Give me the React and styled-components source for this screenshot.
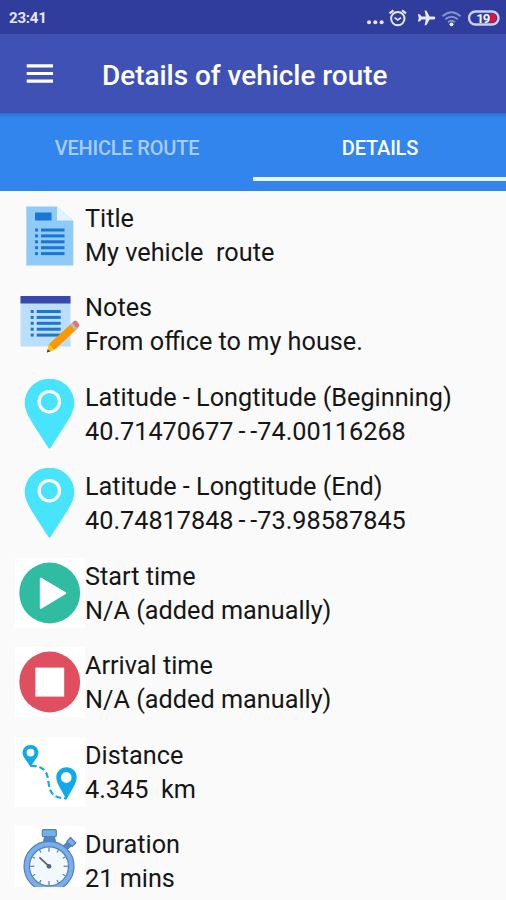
import React from "react";
import styled, { createGlobalStyle } from "styled-components";

const Global = createGlobalStyle`
  * { box-sizing: border-box; }
  body { margin: 0; background: #fafafa; font-family: Roboto, sans-serif; }
`;

const Screen = styled.div`
  width: 506px;
  height: 900px;
  display: flex;
  flex-direction: column;
  background: #fafafa;
  overflow: hidden;
`;

const StatusBar = styled.div`
  height: 34px;
  flex: none;
  display: flex;
  align-items: center;
  justify-content: space-between;
  padding: 1px 6px 0 9px;
  background: #303d9d;
`;

const Clock = styled.span`
  font-size: 15px;
  font-weight: 700;
  line-height: 18px;
  letter-spacing: -0.2px;
  color: #e6e9fa;
`;

const AppBar = styled.header`
  height: 79px;
  flex: none;
  display: flex;
  align-items: center;
  padding: 3px 26px 0;
  background: #3f51b5;
  svg { margin-top: -2px; }
`;

const PageTitle = styled.h1`
  margin: 1px 0 0 48px;
  font-size: 27.9px;
  font-weight: 500;
  line-height: 34px;
  color: #fff;
  white-space: nowrap;
`;

const Tabs = styled.nav`
  height: 78px;
  flex: none;
  display: grid;
  grid-template-columns: 253px 253px;
  padding-bottom: 10px;
  background: linear-gradient(#2b6bc8 0, #3079dc 2px, #3285ec 6px);
`;

const Tab = styled.div`
  display: flex;
  align-items: center;
  justify-content: center;
  border-bottom: 4px solid ${(p) => (p.$active ? "#e9f2fe" : "transparent")};
  padding-top: 5px;
  padding-left: 1px;
  font-size: 20px;
  font-weight: 500;
  letter-spacing: -0.2px;
  color: ${(p) => (p.$active ? "#fff" : "#a9cdf8")};
`;

const List = styled.main`
  height: 695.5px;
  flex: none;
  overflow: hidden;
  padding: 8.5px 0 0 15px;
`;

const Row = styled.div`
  height: 89.5px;
  display: flex;
`;

const Tile = styled.div`
  width: 70px;
  height: 70px;
  flex: none;
  background: ${(p) => (p.$white ? "#fff" : "transparent")};
  svg { display: block; }
`;

const Lines = styled.div`
  padding-top: 2px;
`;

const Line = styled.div`
  font-size: 25.25px;
  line-height: 34.3px;
  color: #161616;
  white-space: pre;
  word-spacing: ${(p) => p.$wordSpacing || 0}px;
`;

const Icon = ({ children }) => (
  <svg width="70" height="70" viewBox="0 0 70 70">{children}</svg>
);

const Bullets = ({ x, y, step, dash }) => (
  <g fill="#1976d2">
    {[0, 1, 2, 3, 4].map((i) => (
      <React.Fragment key={i}>
        <rect x={x} y={y + i * step} width="3" height="3" />
        <rect x={x + 6} y={y + i * step} width={dash} height="3" />
      </React.Fragment>
    ))}
  </g>
);

const DocumentIcon = () => (
  <Icon>
    <path d="M11.3 6.5H42L58.3 21V65.5H11.3Z" fill="#90caf9" />
    <path d="M42 6.5L57.5 20.5H42Z" fill="#e1f5fe" />
    <rect x="20" y="12.5" width="16.5" height="8" fill="#1976d2" />
    <Bullets x={20} y={28.5} step={5.9} dash={23.5} />
  </Icon>
);

const NotesIcon = () => (
  <Icon>
    <rect x="5.5" y="9" width="50" height="48.5" fill="#bbdefb" />
    <rect x="5.5" y="7" width="50" height="7.5" fill="#3949ab" />
    <Bullets x={15.7} y={21} step={5.9} dash={24} />
    <path d="M33.8 55.2L57 34L62.2 39.8L39 61.2Z" fill="#ff9800" />
    <path d="M33.8 55.2L31.8 63.5L39 61.2Z" fill="#ffc107" />
    <path d="M32.6 60.2L31.8 63.5L35.5 62.4Z" fill="#37474f" />
    <path d="M55 35.8L57.5 33.5L63 39.2L60.3 41.6Z" fill="#b0bec5" />
    <path d="M57.2 33.7L59 32Q60.4 31 61.7 32.3L64 35Q65 36.4 63.7 37.7L62 39.3Z" fill="#e57373" />
  </Icon>
);

const PinIcon = () => (
  <Icon>
    <path d="M34.5 -.3C20.8 -.3 9.8 10.6 9.8 24C9.8 34 16.5 42.5 33.5 69Q34.5 70.5 35.5 69C52.5 42.5 59.3 34 59.3 24C59.3 10.6 48.2 -.3 34.5 -.3Z" fill="#48e4fe" />
    <circle cx="34.3" cy="22.7" r="10.2" fill="none" stroke="#fff" strokeWidth="3.2" />
  </Icon>
);

const PlayIcon = () => (
  <Icon>
    <circle cx="34.7" cy="35" r="30.4" fill="#30bca1" />
    <path d="M25.8 20.5V49.8L50.2 35.2Z" fill="#fff" stroke="#fff" strokeWidth="2" strokeLinejoin="round" />
  </Icon>
);

const StopIcon = () => (
  <Icon>
    <circle cx="34.7" cy="35" r="30.4" fill="#e04f5f" />
    <rect x="20.4" y="20.6" width="28.8" height="29" fill="#fff" />
  </Icon>
);

const DistanceIcon = () => (
  <Icon>
    <g fill="#10a9ea" fillRule="evenodd">
      <path d="M15.5 8C10.8 8 7.6 11.4 7.6 15.6C7.6 20 11 22.8 15.5 30C20 22.8 23.4 20 23.4 15.6C23.4 11.4 20.2 8 15.5 8ZM15.5 11.7A3.9 3.9 0 1 1 15.5 19.5A3.9 3.9 0 1 1 15.5 11.7Z" />
      <path d="M51.5 30.3C45.5 30.3 41.3 34.7 41.3 40.3C41.3 46.5 46 52 51.5 62.5C57 52 61.7 46.5 61.7 40.3C61.7 34.7 57.5 30.3 51.5 30.3ZM51.2 35.1A5.4 5.4 0 1 1 51.2 45.9A5.4 5.4 0 1 1 51.2 35.1Z" />
    </g>
    <path d="M15.5 29C27 28.5 32 33 33.2 43C34.5 54 36.5 61.5 51.5 61.3" fill="none" stroke="#10a9ea" strokeWidth="2.2" strokeDasharray="6 2.8" />
  </Icon>
);

const StopwatchIcon = () => (
  <Icon>
    <g fill="#79aeec" stroke="#527fb7" strokeWidth="1.2" strokeLinejoin="round">
      <path d="M29.8 10H39.2L40.5 16H28.5Z" fill="#5086c5" />
      <rect x="27.3" y="3.7" width="14" height="6.8" rx="1" />
      <path d="M48.5 20L54.5 14L58 18L52 23.5Z" fill="#5086c5" />
      <path d="M51.8 15.3L55.5 11.5L60.8 17L57 20.5Z" />
      <circle cx="34" cy="40.3" r="25" />
      <circle cx="34" cy="40.3" r="19.5" fill="#f1f9ff" />
    </g>
    <g stroke="#697a91" strokeWidth="1.2">
      {Array.from({ length: 12 }, (_, i) => (
        <path key={i} d={i % 3 ? "M34 21.5v2.8" : "M34 21.5v4.2"} transform={`rotate(${i * 30} 34 40.3)`} />
      ))}
    </g>
    <path d="M25 31.8L34 40.3" stroke="#566477" strokeWidth="1.8" strokeLinecap="round" />
    <circle cx="34" cy="40.3" r="2.4" fill="#566477" />
  </Icon>
);

const StatusIcons = () => (
  <svg width="138" height="26" viewBox="362 4 138 26">
    <g fill="#e6e9fa">
      <circle cx="369" cy="21.3" r="2" />
      <circle cx="375.3" cy="21.3" r="2" />
      <circle cx="381.6" cy="21.3" r="2" />
      <path d="M433.6 15.4C434.6 15.4 435.3 16 435.3 16.9C435.3 17.8 434.6 18.4 433.6 18.4H429.6L426.4 24.2H424.6L425.8 18.4H421.6L419.8 20.5H417.8L418.8 16.9L417.8 13.3H419.8L421.6 15.4H425.8L424.6 9.6H426.4L429.6 15.4Z" />
    </g>
    <g fill="none" stroke="#e6e9fa" strokeWidth="2">
      <circle cx="397.8" cy="17.6" r="6.7" />
      <path d="M389.5 12.4L393.5 9.3M402 9.3L406 12.4" strokeWidth="2.2" />
      <path d="M394.5 16.6L397.8 18.9L401 16.6" strokeWidth="1.6" />
    </g>
    <g fill="none" stroke="#8691cd" strokeWidth="1.9">
      <path d="M442.5 15.3Q451.5 7.3 460.5 15.3" />
      <path d="M445.3 18.3Q451.5 13 457.7 18.3" />
      <path d="M448 21.2Q451.5 18.3 455 21.2" />
    </g>
    <circle cx="451.5" cy="23.3" r="1.9" fill="#f3f5ff" />
    <rect x="469" y="10.5" width="29.5" height="13" rx="6.5" fill="#303d9d" stroke="#cbd0ec" strokeWidth="2.4" />
    <path d="M489.8 12.2H491.5A4.8 4.8 0 0 1 491.5 21.8H489.8Z" fill="#d71440" />
    <text x="482.7" y="21.7" textAnchor="middle" fontFamily="Roboto, sans-serif" fontSize="13.2" fontWeight="700" letterSpacing="-1.2" fill="#f5f5ff">19</text>
  </svg>
);

const MenuIcon = () => (
  <svg width="28" height="22" viewBox="0 0 28 22">
    <path d="M.7 2.9H27M.7 10.5H27M.7 18.1H27" stroke="#fff" strokeWidth="3.2" />
  </svg>
);

const ROWS = [
  { icon: DocumentIcon, label: "Title", value: "My vehicle  route" },
  { icon: NotesIcon, label: "Notes", value: "From office to my house." },
  { icon: PinIcon, label: "Latitude - Longtitude (Beginning)", value: "40.71470677 - -74.00116268", wordSpacing: -1.4 },
  { icon: PinIcon, label: "Latitude - Longtitude (End)", value: "40.74817848 - -73.98587845", wordSpacing: -1.4 },
  { icon: PlayIcon, white: true, label: "Start time", value: "N/A (added manually)" },
  { icon: StopIcon, white: true, label: "Arrival time", value: "N/A (added manually)" },
  { icon: DistanceIcon, white: true, label: "Distance", value: "4.345  km" },
  { icon: StopwatchIcon, white: true, label: "Duration", value: "21 mins" },
];

export default function App() {
  return (
    <Screen>
      <Global />
      <StatusBar>
        <Clock>23:41</Clock>
        <StatusIcons />
      </StatusBar>
      <AppBar>
        <MenuIcon />
        <PageTitle>Details of vehicle route</PageTitle>
      </AppBar>
      <Tabs>
        <Tab>VEHICLE ROUTE</Tab>
        <Tab $active>DETAILS</Tab>
      </Tabs>
      <List>
        {ROWS.map(({ icon: RowIcon, white, label, value, wordSpacing }) => (
          <Row key={label}>
            <Tile $white={white}><RowIcon /></Tile>
            <Lines>
              <Line>{label}</Line>
              <Line $wordSpacing={wordSpacing}>{value}</Line>
            </Lines>
          </Row>
        ))}
      </List>
    </Screen>
  );
}
